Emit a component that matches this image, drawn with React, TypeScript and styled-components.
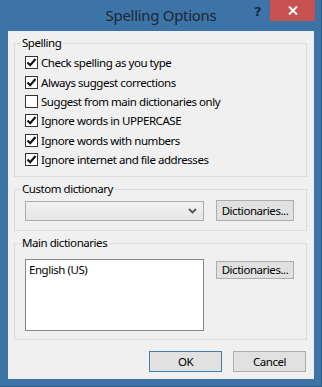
import React from "react";
import styled, { createGlobalStyle } from "styled-components";

const GlobalStyle = createGlobalStyle`
  html, body {
    margin: 0;
    padding: 0;
    background: #3b73a7;
  }
  * {
    box-sizing: border-box;
  }
`;

const Window = styled.div`
  width: 322px;
  height: 387px;
  background: #3c74a8;
  border-right: 1px solid #2c5a86;
  border-bottom: 1px solid #2c5a86;
  display: flex;
  flex-direction: column;
  padding: 0 7px 7px 8px;
  font-family: "Noto Sans", "Open Sans", sans-serif;
  font-size: 11.5px;
  letter-spacing: -0.45px;
  color: #000;
`;

const TitleBar = styled.div`
  height: 31px;
  display: flex;
  align-items: flex-start;
  position: relative;
`;

const Title = styled.div`
  flex: 1;
  text-align: center;
  font-size: 15px;
  letter-spacing: -0.3px;
  line-height: 20px;
  padding-top: 5px;
  color: #1c2733;
`;

const HelpIcon = styled.div`
  position: absolute;
  right: 53px;
  top: 5px;
  font-size: 13px;
  font-weight: bold;
  line-height: 14px;
  color: #1d2a38;
  font-family: "DejaVu Sans", sans-serif;
`;

const CloseButton = styled.div`
  position: absolute;
  right: -1px;
  top: 0;
  width: 45px;
  height: 21px;
  background: #c75050;
  display: flex;
  align-items: center;
  justify-content: center;
`;

const Client = styled.div`
  flex: 1;
  background: #f0f0f0;
  display: flex;
  flex-direction: column;
  padding: 4px 7px 0 6px;
`;

const Group = styled.fieldset<{ $height: number }>`
  margin: 0;
  padding: 0;
  border: 1px solid #dcdcdc;
  height: ${(p) => p.$height}px;
  min-inline-size: 0;
  & + & {
    margin-top: 4px;
  }
`;

const Legend = styled.legend`
  margin-left: 6px;
  padding: 0 2px 0 1px;
  line-height: 16px;
  height: 16px;
`;

const CheckList = styled.div`
  display: flex;
  flex-direction: column;
  padding: 2px 0 0 10px;
`;

const CheckRow = styled.label`
  display: flex;
  align-items: center;
  height: 19.4px;
  gap: 3px;
  white-space: nowrap;
`;

const Box = styled.span`
  width: 13px;
  height: 13px;
  border: 1px solid #333;
  background: #fff;
  display: flex;
  align-items: center;
  justify-content: center;
  flex: none;
`;

const Row = styled.div<{ $top: number }>`
  display: flex;
  align-items: flex-start;
  padding: ${(p) => p.$top}px 0 0 10px;
  gap: 12px;
`;

const Combo = styled.div`
  width: 179px;
  height: 20px;
  margin-top: 1px;
  border: 1px solid #acacac;
  background: linear-gradient(#f2f2f2, #e5e5e5);
  display: flex;
  align-items: center;
  justify-content: flex-end;
  padding-right: 6px;
`;

const Button = styled.div<{ $height?: number; $width?: number; $default?: boolean }>`
  width: ${(p) => p.$width ?? 78}px;
  height: ${(p) => p.$height ?? 21}px;
  border: 1px solid ${(p) => (p.$default ? "#3c7fb1" : "#adadad")};
  background: #e1e1e1;
  display: flex;
  align-items: center;
  justify-content: center;
  white-space: nowrap;
  padding-bottom: 1px;
`;

const ListBox = styled.div`
  width: 179px;
  height: 72px;
  border: 1px solid #828790;
  background: #fff;
  padding: 2px 0 0 3px;
  line-height: 16px;
`;

const Footer = styled.div`
  display: flex;
  justify-content: flex-end;
  gap: 11px;
  padding: 11px 1px 0 0;
`;

const Check = () => (
  <svg width="11" height="11" viewBox="0 0 11 11">
    <path d="M1.5 5.5 L4.2 8.2 L9.5 2" fill="none" stroke="#111" strokeWidth="2.2" />
  </svg>
);

const options = [
  { text: "Check spelling as you type", checked: true },
  { text: "Always suggest corrections", checked: true },
  { text: "Suggest from main dictionaries only", checked: false },
  { text: "Ignore words in UPPERCASE", checked: true },
  { text: "Ignore words with numbers", checked: true },
  { text: "Ignore internet and file addresses", checked: true },
];

export default function App() {
  return (
    <>
      <GlobalStyle />
      <Window>
        <TitleBar>
          <Title>Spelling Options</Title>
          <HelpIcon>?</HelpIcon>
          <CloseButton>
            <svg width="10" height="9" viewBox="0 0 10 9">
              <path d="M1 0.5 L9 8.5 M9 0.5 L1 8.5" stroke="#fff" strokeWidth="2" />
            </svg>
          </CloseButton>
        </TitleBar>
        <Client>
          <Group $height={142}>
            <Legend>Spelling</Legend>
            <CheckList>
              {options.map((o) => (
                <CheckRow key={o.text}>
                  <Box>{o.checked && <Check />}</Box>
                  {o.text}
                </CheckRow>
              ))}
            </CheckList>
          </Group>
          <Group $height={50}>
            <Legend>Custom dictionary</Legend>
            <Row $top={3}>
              <Combo>
                <svg width="9" height="6" viewBox="0 0 9 6">
                  <path d="M1 1 L4.5 4.5 L8 1" fill="none" stroke="#555" strokeWidth="1.8" />
                </svg>
              </Combo>
              <Button>Dictionaries...</Button>
            </Row>
          </Group>
          <Group $height={105}>
            <Legend>Main dictionaries</Legend>
            <Row $top={8}>
              <ListBox>English (US)</ListBox>
              <Button $height={18} style={{ marginTop: 2 }}>Dictionaries...</Button>
            </Row>
          </Group>
          <Footer>
            <Button $width={73} $height={21} $default>OK</Button>
            <Button $width={73} $height={21}>Cancel</Button>
          </Footer>
        </Client>
      </Window>
    </>
  );
}
